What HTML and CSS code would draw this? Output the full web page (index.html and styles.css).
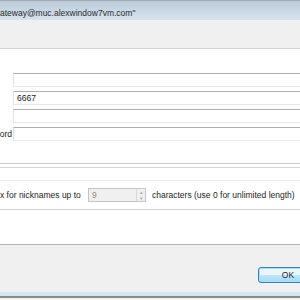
FILE: index.html
```
<!doctype html>
<html>
<head>
<meta charset="UTF-8">
<title>Server settings</title>
<link rel="stylesheet" href="styles.css">
</head>
<body>
<div class="window">
  <div class="titlebar"><span class="title">ateway@muc.alexwindow7vm.com"</span></div>
  <div class="tabstrip"></div>

  <div class="panel">
    <div class="fields">
      <label class="lbl"></label>
      <div class="edit"></div>
      <label class="lbl"></label>
      <div class="edit">6667</div>
      <label class="lbl"></label>
      <div class="edit"></div>
      <label class="lbl">ord</label>
      <div class="edit"></div>
    </div>

    <div class="rule rule-dark"></div>
    <div class="rule rule-mid"></div>
    <div class="rule rule-faint"></div>

    <div class="nickrow">
      <span class="nicklabel">x for nicknames up to</span>
      <div class="spin">
        <span class="spin-val">9</span>
        <span class="spin-btns">
          <span class="spin-btn">&#9652;</span>
          <span class="spin-btn">&#9662;</span>
        </span>
      </div>
      <span class="nicktail">characters (use 0 for unlimited length)</span>
    </div>
    <div class="rule rule-mid"></div>
  </div>

  <div class="footer">
    <button class="btn-ok">OK</button>
  </div>
  <div class="taskstrip"></div>
</div>
</body>
</html>
```

FILE: styles.css
```
html, body {
	margin:0;
	height:100%;
}

body {
	font-family: "Liberation Sans", Arial, sans-serif;
	font-size: 8.5px;
	color: #1e1e1e;
	overflow: hidden;
}

.window {
	width: 300px;
	height: 300px;
	overflow: hidden;
	display: flex;
	flex-direction: column;
	background: #f0f0f0;
}

/* title bar */
.titlebar {
	height: 19px;
	border-top: 1px solid #a4a9b0;
	background: linear-gradient(#bccbd9, #d6e3ef);
	display: flex;
	align-items: center;
	white-space: nowrap;
}

.title {
	color: #2b2b2b;
	padding-top: 5px;
}

.tabstrip {
	height: 28px;
}

/* main white page */
.panel {
	height: 197px;
	background: #fff;
	border-top: 1px solid #d3d3d3;
	border-bottom: 1px solid #b5b5b5;
	padding-top: 24px;
	box-sizing: border-box;
}

.fields {
	display: grid;
	grid-template-columns: 13px 320px;
	row-gap: 4px;
}

.lbl {
	display: flex;
	justify-content: flex-end;
	align-items: center;
	white-space: nowrap;
	padding-right: 1px;
	box-sizing: border-box;
}

.edit {
	height: 14px;
	box-sizing: border-box;
	border: 1px solid #e2e3ea;
	border-top-color: #abadb3;
	border-bottom-color: #e3e9ef;
	padding-left: 3px;
	line-height: 12px;
	color: #1a1a1a;
}

.rule {
	height: 1px;
}

.rule-dark {
	margin-top: 22px;
	background: #c8c8c8;
}

.rule-mid {
	margin-top: 3px;
	background: #d5d5d5;
}

.rule-faint {
	margin-top: 12px;
	background: #ececec;
}

.nickrow {
	display: flex;
	align-items: center;
	height: 14px;
	margin: 7px 0 7px;
	white-space: nowrap;
}

.nicklabel {
	width: 88px;
	flex-shrink: 0;
}

.spin {
	width: 58px;
	height: 14px;
	box-sizing: border-box;
	border: 1px solid #c5c5c5;
	background: #f0f0f0;
	display: flex;
	flex-shrink: 0;
}

.spin-val {
	flex: 1;
	padding-left: 3px;
	line-height: 12px;
	color: #8d8d8d;
}

.spin-btns {
	width: 8px;
	display: flex;
	flex-direction: column;
	border-left: 1px solid #d8d8d8;
}

.spin-btn {
	flex: 1;
	font-size: 5px;
	line-height: 6px;
	text-align: center;
	color: #a8a8a8;
}

.nicktail {
	margin-left: 6px;
}

/* bottom button area */
.footer {
	height: 47px;
	display: flex;
	justify-content: flex-end;
	align-items: flex-start;
	padding-top: 22px;
	box-sizing: border-box;
}

.btn-ok {
	width: 60px;
	height: 16px;
	margin-right: -18px;
	padding: 0;
	border: 1px solid #3c7fb1;
	border-radius: 3px;
	background: linear-gradient(#eaf6fd 50%, #bee6fd 50%, #a7d9f5);
	box-shadow: inset 0 0 0 1px #9fe3fe;
	font-family: "Liberation Sans", Arial, sans-serif;
	font-size: 8.5px;
	color: #1e1e1e;
	line-height: 12px;
}

.taskstrip {
	height: 4px;
	background: #d9e4f1;
	border-bottom: 2px solid #8c8c8c;
}
```
